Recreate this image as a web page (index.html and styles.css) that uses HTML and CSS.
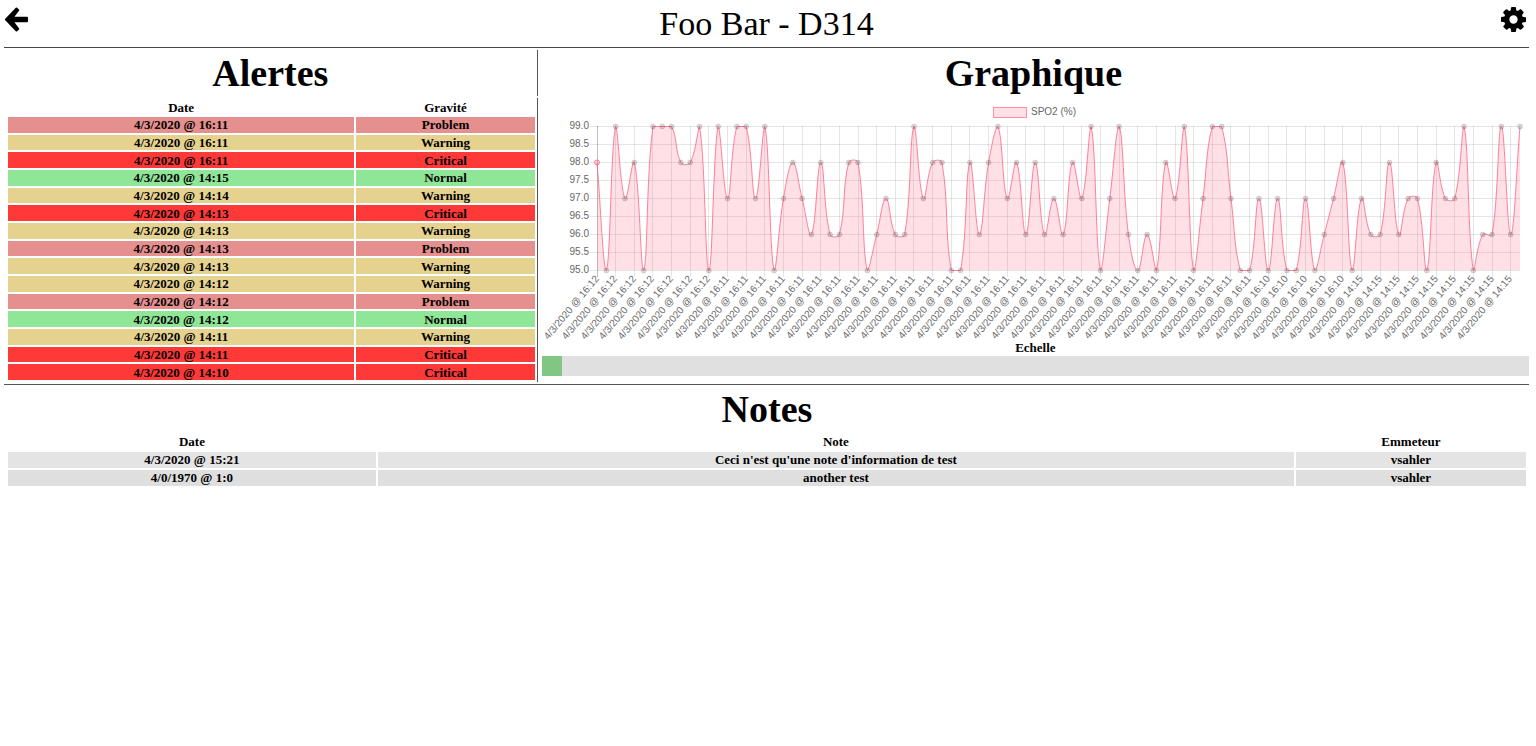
FILE: index.html
```html
<!DOCTYPE html>
<html lang="fr">
<head>
<meta charset="UTF-8">
<title>Foo Bar - D314</title>

<link rel="stylesheet" href="styles.css">

</head>
<body>
	<header class="topbar">
		<a class="icon" href="#" aria-label="Retour">
			<svg viewBox="0 0 25 25"><path class="arrow" d="M1 12.500L11.500 1.500 13.200 3.200 7.500 10.700H22V14.300H7.500L13.200 21.800 11.500 23.500Z"/></svg>
		</a>
		<div class="patient">Foo Bar - D314</div>
		<button class="icon" type="button" aria-label="Options">
			<svg viewBox="0 128 1536 1536"><path d="M1024 896q0-106-75-181t-181-75-181 75-75 181 75 181 181 75 181-75 75-181zm512-109v222q0 12-8 23t-20 13l-185 28q-19 54-39 91 35 50 107 138 10 12 10 25t-9 23q-27 37-99 108t-94 71q-12 0-26-9l-138-108q-44 23-91 38-16 136-29 186-7 28-36 28h-222q-14 0-24.500-8.500t-11.500-21.500l-28-184q-49-16-90-37l-141 107q-10 9-25 9-14 0-25-11-126-114-165-168-7-10-7-23 0-12 8-23 15-21 51-66.500t54-70.500q-27-50-41-99l-183-27q-13-2-21-12.500t-8-23.500v-222q0-12 8-23t19-13l186-28q14-46 39-92-40-57-107-138-10-12-10-24 0-10 9-23 26-36 98.500-107.500t94.500-71.500q13 0 26 10l138 107q44-23 91-38 16-136 29-186 7-28 36-28h222q14 0 24.500 8.500t11.500 21.500l28 184q49 16 90 37l142-107q9-9 24-9 13 0 25 10 129 119 165 170 7 8 7 22 0 12-8 23-15 21-51 66.500t-54 70.500q26 50 41 98l183 28q13 2 21 12.500t8 23.500z"/></svg>
		</button>
	</header>

	<main>
		<div class="panels">
			<h1 class="left">Alertes</h1>
			<h1>Graphique</h1>

			<div class="alerts left">
				<table>
					<thead>
						<tr><th class="col-date">Date</th><th>Gravité</th></tr>
					</thead>
					<tbody>
						<tr class="problem"><td>4/3/2020 @ 16:11</td><td>Problem</td></tr>
						<tr class="warning"><td>4/3/2020 @ 16:11</td><td>Warning</td></tr>
						<tr class="critical"><td>4/3/2020 @ 16:11</td><td>Critical</td></tr>
						<tr class="normal"><td>4/3/2020 @ 14:15</td><td>Normal</td></tr>
						<tr class="warning"><td>4/3/2020 @ 14:14</td><td>Warning</td></tr>
						<tr class="critical"><td>4/3/2020 @ 14:13</td><td>Critical</td></tr>
						<tr class="warning"><td>4/3/2020 @ 14:13</td><td>Warning</td></tr>
						<tr class="problem"><td>4/3/2020 @ 14:13</td><td>Problem</td></tr>
						<tr class="warning"><td>4/3/2020 @ 14:13</td><td>Warning</td></tr>
						<tr class="warning"><td>4/3/2020 @ 14:12</td><td>Warning</td></tr>
						<tr class="problem"><td>4/3/2020 @ 14:12</td><td>Problem</td></tr>
						<tr class="normal"><td>4/3/2020 @ 14:12</td><td>Normal</td></tr>
						<tr class="warning"><td>4/3/2020 @ 14:11</td><td>Warning</td></tr>
						<tr class="critical"><td>4/3/2020 @ 14:11</td><td>Critical</td></tr>
						<tr class="critical"><td>4/3/2020 @ 14:10</td><td>Critical</td></tr>
					</tbody>
				</table>
			</div>

			<div class="graph">
				<svg id="chart" class="chart"></svg>
				<label for="scale">Echelle</label>
				<input type="range" id="scale" class="slider" min="1" max="100" value="1">
			</div>
		</div>

		<section class="notes">
			<h1>Notes</h1>
			<table>
				<thead>
					<tr><th class="col-note-date">Date</th><th>Note</th><th class="col-from">Emmeteur</th></tr>
				</thead>
				<tbody>
					<tr><td>4/3/2020 @ 15:21</td><td>Ceci n'est qu'une note d'information de test</td><td>vsahler</td></tr>
					<tr><td>4/0/1970 @ 1:0</td><td>another test</td><td>vsahler</td></tr>
				</tbody>
			</table>
		</section>
	</main>

	<script src="chart.js"></script>
</body>
</html>
```
FILE: styles.css
```css
body {
	margin: 0 7px 0 4px;
	font-family: "Liberation Serif", "Times New Roman", serif;
	color: #000;
	background-color: #fff;
}

/* top bar */
.topbar {
	display: flex;
	justify-content: space-between;
	align-items: center;
	height: 47px;
	border-bottom: 1px solid #444;
}

.patient {
	font-size: 34px;
}

.icon {
	display: block;
	padding: 0 3px 8px 1px;
	border: none;
	background: none;
	cursor: pointer;
}

.icon svg {
	display: block;
	width: 25px;
	height: 25px;
}

.arrow {
	stroke: #000;
	stroke-width: 2;
	stroke-linejoin: round;
}

h1 {
	margin: 0;
	font-size: 38px;
	line-height: 46px;
	text-align: center;
}

/* alerts on the left, graph on the right */
.panels {
	display: grid;
	grid-template-columns: 35fr 65fr;
	row-gap: 2px;
	padding: 2px 0;
	border-bottom: 1px solid #555;
}

.left {
	border-right: 1px solid #555;
}

.alerts {
	display: flex;
	padding-left: 2px;
}

table {
	width: 100%;
	border-spacing: 2px;
	table-layout: fixed;
	font-size: 13px;
	font-weight: bold;
	line-height: 15px;
	text-align: center;
}

th, td {
	padding: 0;
}

.col-date {
	width: 66%;
}

.problem {
	background-color: #e68f8f;
}

.warning {
	background-color: #e6d28f;
}

.critical {
	background-color: #ff3838;
}

.normal {
	background-color: #8fe696;
}

.graph {
	display: flex;
	flex-direction: column;
	padding-left: 4px;
	padding-bottom: 6px;
	font-size: 13px;
	font-weight: bold;
	line-height: 17px;
	text-align: center;
}

.chart {
	display: block;
	width: 100%;
	height: 241px;
	overflow: visible;
	font-family: "Liberation Sans", Arial, sans-serif;
	font-size: 10px;
	font-weight: normal;
}

.chart text {
	fill: #666;
}

.chart .grid {
	stroke: rgba(0, 0, 0, 0.1);
}

.chart .axis {
	stroke: rgba(0, 0, 0, 0.25);
}

.chart .area {
	fill: rgba(255, 99, 132, 0.2);
}

.chart .line {
	fill: none;
	stroke: rgba(255, 99, 132, 0.8);
}

.chart .box {
	fill: rgba(255, 99, 132, 0.2);
	stroke: rgba(255, 99, 132, 0.7);
}

.chart .dot {
	fill: rgba(0, 0, 0, 0.15);
	stroke: rgba(0, 0, 0, 0.1);
}

.chart .dot-first {
	fill: rgba(255, 99, 132, 0.2);
	stroke: rgba(255, 99, 132, 0.8);
}

/* scale slider */
.slider {
	-webkit-appearance: none;
	appearance: none;
	width: 100%;
	height: 20px;
	margin: 0;
	background: #d3d3d3;
	opacity: 0.7;
	outline: none;
}

.slider::-webkit-slider-thumb {
	-webkit-appearance: none;
	appearance: none;
	width: 20px;
	height: 20px;
	background: #4caf50;
	cursor: pointer;
}

/* notes */
.notes {
	padding: 1px 1px 0 2px;
}

.notes table {
	line-height: 16px;
}

.notes tbody tr {
	background-color: #e4e4e4;
}

.notes tbody tr:nth-child(even) {
	background-color: #dfdfdf;
}

.col-note-date {
	width: 24.3%;
}

.col-from {
	width: 15.2%;
}
```
FILE: chart.js
```javascript
var values = [
	98, 95, 99, 97, 98, 95, 99, 99, 99, 98, 98, 99, 95, 99, 97, 99, 99, 97, 99, 95,
	97, 98, 97, 96, 98, 96, 96, 98, 98, 95, 96, 97, 96, 96, 99, 97, 98, 98, 95, 95,
	98, 96, 98, 99, 97, 98, 96, 98, 96, 97, 96, 98, 97, 99, 95, 97, 99, 96, 95, 96,
	95, 98, 97, 99, 95, 97, 99, 99, 97, 95, 95, 97, 95, 97, 95, 95, 97, 95, 96, 97,
	98, 95, 97, 96, 96, 98, 96, 97, 97, 95, 98, 97, 97, 99, 95, 96, 96, 99, 96, 99
];

var chart = document.getElementById("chart");

function add(name, attrs, text) {
	var el = document.createElementNS("http://www.w3.org/2000/svg", name);
	for (var key in attrs) {
		el.setAttribute(key, attrs[key]);
	}
	if (text) {
		el.textContent = text;
	}
	chart.appendChild(el);
}

function timeOf(i) {
	if (i < 14) return "16:12";
	if (i < 72) return "16:11";
	if (i < 82) return "16:10";
	return "14:15";
}

function draw() {
	var left = 55, top = 28, bottom = 172;
	var width = chart.clientWidth;
	var right = width - 9;
	var step = (right - left) / (values.length - 1);
	chart.innerHTML = "";

	// legend
	var mid = width / 2;
	add("rect", {"class": "box", x: Math.round(mid - 43) + 0.5, y: 9.5, width: 33, height: 10});
	add("text", {x: Math.round(mid - 5), y: 17}, "SPO2 (%)");

	// horizontal grid
	for (var v = 95; v <= 99; v += 0.5) {
		var y = bottom - (v - 95) * 36;
		add("line", {"class": "grid", x1: left - 7, x2: right, y1: y + 0.5, y2: y + 0.5});
		add("text", {x: left - 8, y: y + 3, "text-anchor": "end"}, v.toFixed(1));
	}

	// vertical grid and dates
	for (var i = 0; i < values.length; i += 2) {
		var x = Math.round(left + i * step - 0.5) + 0.5;
		add("line", {"class": i ? "grid" : "axis", x1: x, x2: x, y1: top, y2: bottom + 7});
		add("text", {
			transform: "translate(" + (x + 2) + "," + (bottom + 9) + ") rotate(-50)",
			"text-anchor": "end"
		}, "4/3/2020 @ " + timeOf(i));
	}

	var points = values.map(function(value, i) {
		return {x: left + i * step, y: bottom - (value - 95) * 36 + 0.5};
	});

	// control points, kept inside the chart area
	function clamp(y) {
		return Math.max(top + 0.5, Math.min(bottom + 0.5, y));
	}
	points.forEach(function(p, i) {
		var a = points[i - 1] || p;
		var b = points[i + 1] || p;
		var d1 = Math.hypot(p.x - a.x, p.y - a.y);
		var d2 = Math.hypot(b.x - p.x, b.y - p.y);
		var k1 = 0.4 * d1 / (d1 + d2);
		var k2 = 0.4 * d2 / (d1 + d2);
		p.before = [p.x - k1 * (b.x - a.x), clamp(p.y - k1 * (b.y - a.y))];
		p.after = [p.x + k2 * (b.x - a.x), clamp(p.y + k2 * (b.y - a.y))];
	});

	var d = "M" + points[0].x + "," + points[0].y;
	for (var n = 1; n < points.length; n++) {
		d += "C" + points[n - 1].after + " " + points[n].before + " " + points[n].x + "," + points[n].y;
	}
	add("path", {"class": "area", d: d + "V" + bottom + "H" + left + "Z"});
	add("path", {"class": "line", d: d});

	points.forEach(function(p, i) {
		add("circle", {"class": i ? "dot" : "dot-first", cx: p.x, cy: p.y, r: 2.5});
	});
}

draw();
window.onresize = draw;
```
